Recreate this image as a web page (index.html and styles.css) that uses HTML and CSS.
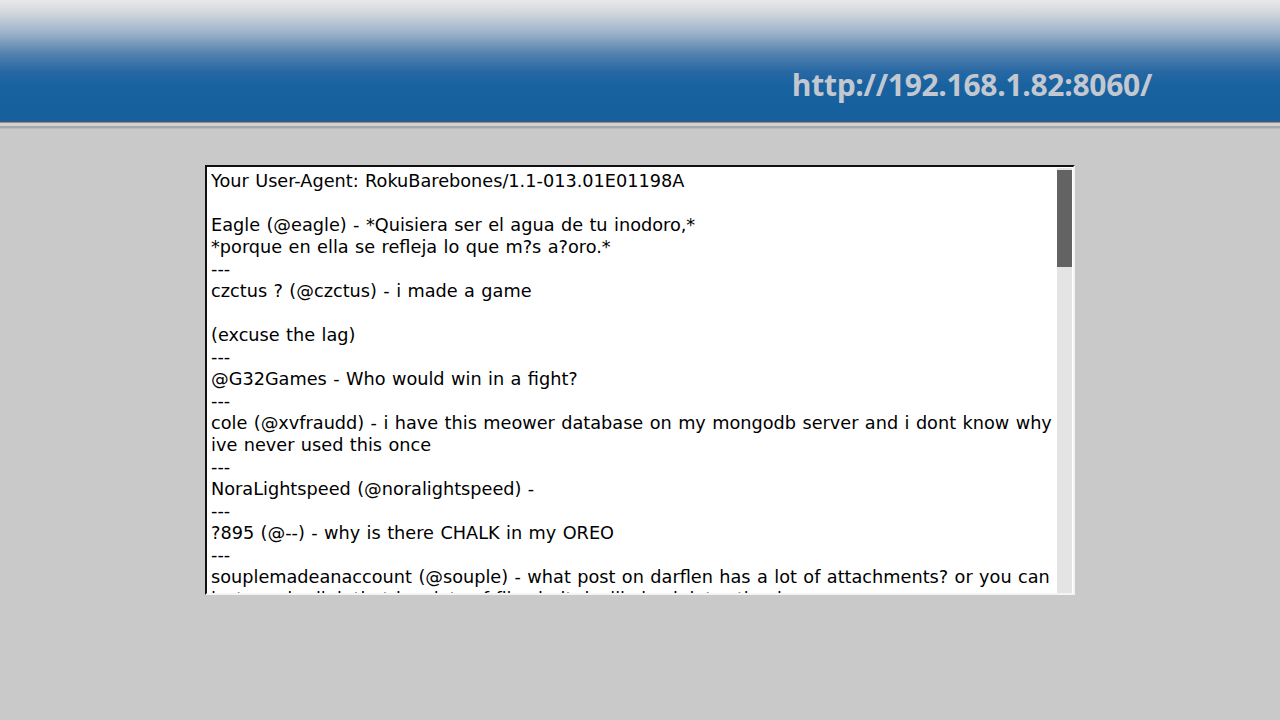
FILE: index.html
```html
<!DOCTYPE html>
<html>
<head>
<meta charset="utf-8">
<link rel="stylesheet" href="styles.css">
</head>
<body>
<header class="top">
  <div class="url">http://192.168.1.82:8060/</div>
</header>
<div class="rule"></div>
<main class="stage">
  <div class="box">
    <div class="text">Your User-Agent: RokuBarebones/1.1-013.01E01198A

Eagle (@eagle) - *Quisiera ser el agua de tu inodoro,*
*porque en ella se refleja lo que m?s a?oro.*
---
czctus ? (@czctus) - i made a game

(excuse the lag)
---
@G32Games - Who would win in a fight?
---
cole (@xvfraudd) - i have this meower database on my mongodb server and i dont know why ive never used this once
---
NoraLightspeed (@noralightspeed) - 
---
?895 (@--) - why is there CHALK in my OREO
---
souplemadeanaccount (@souple) - what post on darflen has a lot of attachments? or you can just send a link that has lots of files in it, i will check later thanks
---</div>
    <div class="scroll"><div class="thumb"></div></div>
  </div>
</main>
</body>
</html>
```
FILE: styles.css
```css
html, body {
  margin: 0;
  padding: 0;
  height: 100%;
}
body {
  background: #c9c9c9;
  overflow: hidden;
}
.top {
  height: 121px;
  background: linear-gradient(to bottom, #e8e9eb 0px, #d4d8dd 12px, #9fb4ca 32px, #4f7fae 55px, #2768a3 72px, #1862a0 85px, #165f9d 121px);
  display: flex;
  justify-content: flex-end;
  align-items: flex-start;
  padding-right: 128px;
  box-sizing: border-box;
}
.url {
  margin-top: 65px;
  font-family: "Open Sans", "DejaVu Sans", sans-serif;
  font-weight: 700;
  font-size: 30px;
  line-height: 40px;
  color: #c3c8d0;
  letter-spacing: -0.3px;
}
.rule {
  height: 8px;
  background: linear-gradient(to bottom, #4d5866 0px, #4d5866 1px, #8a909a 1px, #8a909a 2px, #d2d2d2 2px, #d2d2d2 5px, #a8a8a8 5px, #a8a8a8 7px, #bcbcbc 7px, #bcbcbc 8px);
}
.stage {
  padding-top: 36px;
  padding-left: 205px;
}
.box {
  width: 870px;
  height: 430px;
  box-sizing: border-box;
  border-top: 2px solid #111;
  border-left: 2px solid #111;
  border-right: 2px solid #f4f4f4;
  border-bottom: 2px solid #f4f4f4;
  background: #fff;
  display: flex;
  overflow: hidden;
}
.text {
  flex: 1;
  padding: 3px 3px 0 4px;
  font-family: "DejaVu Sans", sans-serif;
  font-size: 17.7px;
  line-height: 22px;
  word-spacing: 0.8px;
  color: #000;
  white-space: pre-wrap;
  overflow: hidden;
}
.scroll {
  width: 15px;
  flex: none;
  background: #e4e4e4;
  margin: 1px 1px 0 0;
  padding-top: 2px;
}
.thumb {
  height: 97px;
  background: #636363;
}
```
